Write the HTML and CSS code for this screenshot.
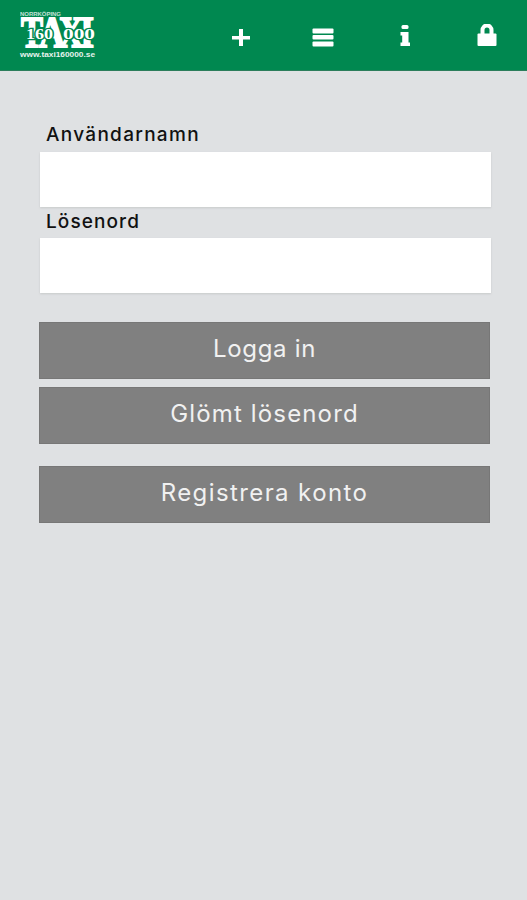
FILE: index.html
```html
<!DOCTYPE html>
<html lang="sv">
<head>
<meta charset="utf-8">
<title>Taxi 160 000</title>
<link rel="stylesheet" href="styles.css">
</head>
<body>
<header class="bar">
  <svg class="logo" width="80" height="50" viewBox="0 0 80 50">
    <text class="city" x="2" y="6" textLength="41" lengthAdjust="spacingAndGlyphs">NORRKÖPING</text>
    <text class="word" x="3" y="37" textLength="22" lengthAdjust="spacingAndGlyphs">T</text>
    <text class="word" x="21" y="37" textLength="26" lengthAdjust="spacingAndGlyphs">A</text>
    <text class="word" x="41" y="37" textLength="24" lengthAdjust="spacingAndGlyphs">X</text>
    <text class="word" x="62" y="37" textLength="14" lengthAdjust="spacingAndGlyphs">I</text>
    <text class="number" x="8" y="28.500" textLength="27" lengthAdjust="spacingAndGlyphs">160</text>
    <text class="number" x="45" y="28.500" textLength="32" lengthAdjust="spacingAndGlyphs">000</text>
    <text class="url" x="2" y="46.500" textLength="75" lengthAdjust="spacingAndGlyphs">www.taxi160000.se</text>
  </svg>
  <nav class="nav">
    <svg width="22" height="26" viewBox="0 0 22 26"><path d="M9 5h4v7h7v3.500h-7V22H9v-6.500H2V12h7z"/></svg>
    <svg width="22" height="26" viewBox="0 0 22 26"><rect x=".5" y="4.500" width="21" height="5" rx="1"/><rect x=".5" y="11" width="21" height="4.500" rx="1"/><rect x=".5" y="17.500" width="21" height="5" rx="1"/></svg>
    <svg width="22" height="26" viewBox="0 0 22 26"><rect x="7.500" y="1" width="7" height="4" rx="1.500"/><path d="M6.500 8h8v10.500h1.500v3.500h-9.500v-3.500h1.700v-7H6.500z"/></svg>
    <svg width="22" height="26" viewBox="0 0 22 26"><path class="shackle" d="M6.500 12V6a4.500 4.500 0 0 1 9 0v6"/><rect x="1.500" y="9.500" width="19" height="12.500" rx="1"/></svg>
  </nav>
</header>
<form class="login">
  <label class="label user" for="user"><span>Användarnamn</span></label>
  <input class="field" id="user" type="text">
  <label class="label pass" for="pass"><span>Lösenord</span></label>
  <input class="field" id="pass" type="password">
  <div class="actions">
    <button class="button enter" type="button">Logga in</button>
    <button class="button forgot" type="button">Glömt lösenord</button>
    <button class="button register" type="button">Registrera konto</button>
  </div>
</form>
</body>
</html>
```

FILE: styles.css
```css
* { box-sizing: border-box; }
body {
  margin: 0;
  min-height: 900px;
  background: #dfe1e3;
  font-family: Inter, "Liberation Sans", sans-serif;
}
.bar {
  display: flex;
  justify-content: space-between;
  height: 71px;
  padding: 10px 29px 0 18px;
  background: #008850;
  border-bottom: 1px solid #2b7d5b;
}
.logo { fill: #fff; overflow: visible; }
.city { font: 700 5px "Liberation Sans", sans-serif; opacity: .75; }
.word {
  font: 700 44px "Liberation Serif", serif;
  stroke: #fff;
  stroke-width: 1.800;
}
.number {
  font: 700 14px "Liberation Serif", serif;
  stroke: #008850;
  stroke-width: 2.500;
  paint-order: stroke;
}
.url { font: 700 7px "Liberation Sans", sans-serif; opacity: .9; }
.nav { display: flex; gap: 60px; padding-top: 14px; fill: #fff; }
.shackle { fill: none; stroke: #fff; stroke-width: 4; }
.login { display: flex; flex-direction: column; padding: 45px 36px 0 39px; }
.label {
  height: 31px;
  padding-left: 7px;
  font-size: 19px;
  font-weight: 500;
  line-height: 31px;
  color: #111;
}
.label.user { height: 36px; padding-top: 3px; letter-spacing: 1.300px; }
.label.pass { letter-spacing: 1.100px; line-height: 29px; }
.field {
  height: 55px;
  margin-left: 1px;
  padding: 0 8px;
  border: 0;
  background: #fff;
  box-shadow: 0 1px 2px #c8cacb;
  font: inherit;
  outline: 0;
}
.actions { display: flex; flex-direction: column; gap: 8px; margin: 29px 1px 0 0; }
.button {
  height: 57px;
  padding: 0 0 4px;
  border: 1px solid #777;
  background: #808080;
  color: #f1f1f1;
  font: 400 24px Inter, sans-serif;
}
.enter { letter-spacing: .7px; }
.forgot { letter-spacing: 1.150px; }
.register { margin-top: 14px; letter-spacing: 1.400px; }
```
